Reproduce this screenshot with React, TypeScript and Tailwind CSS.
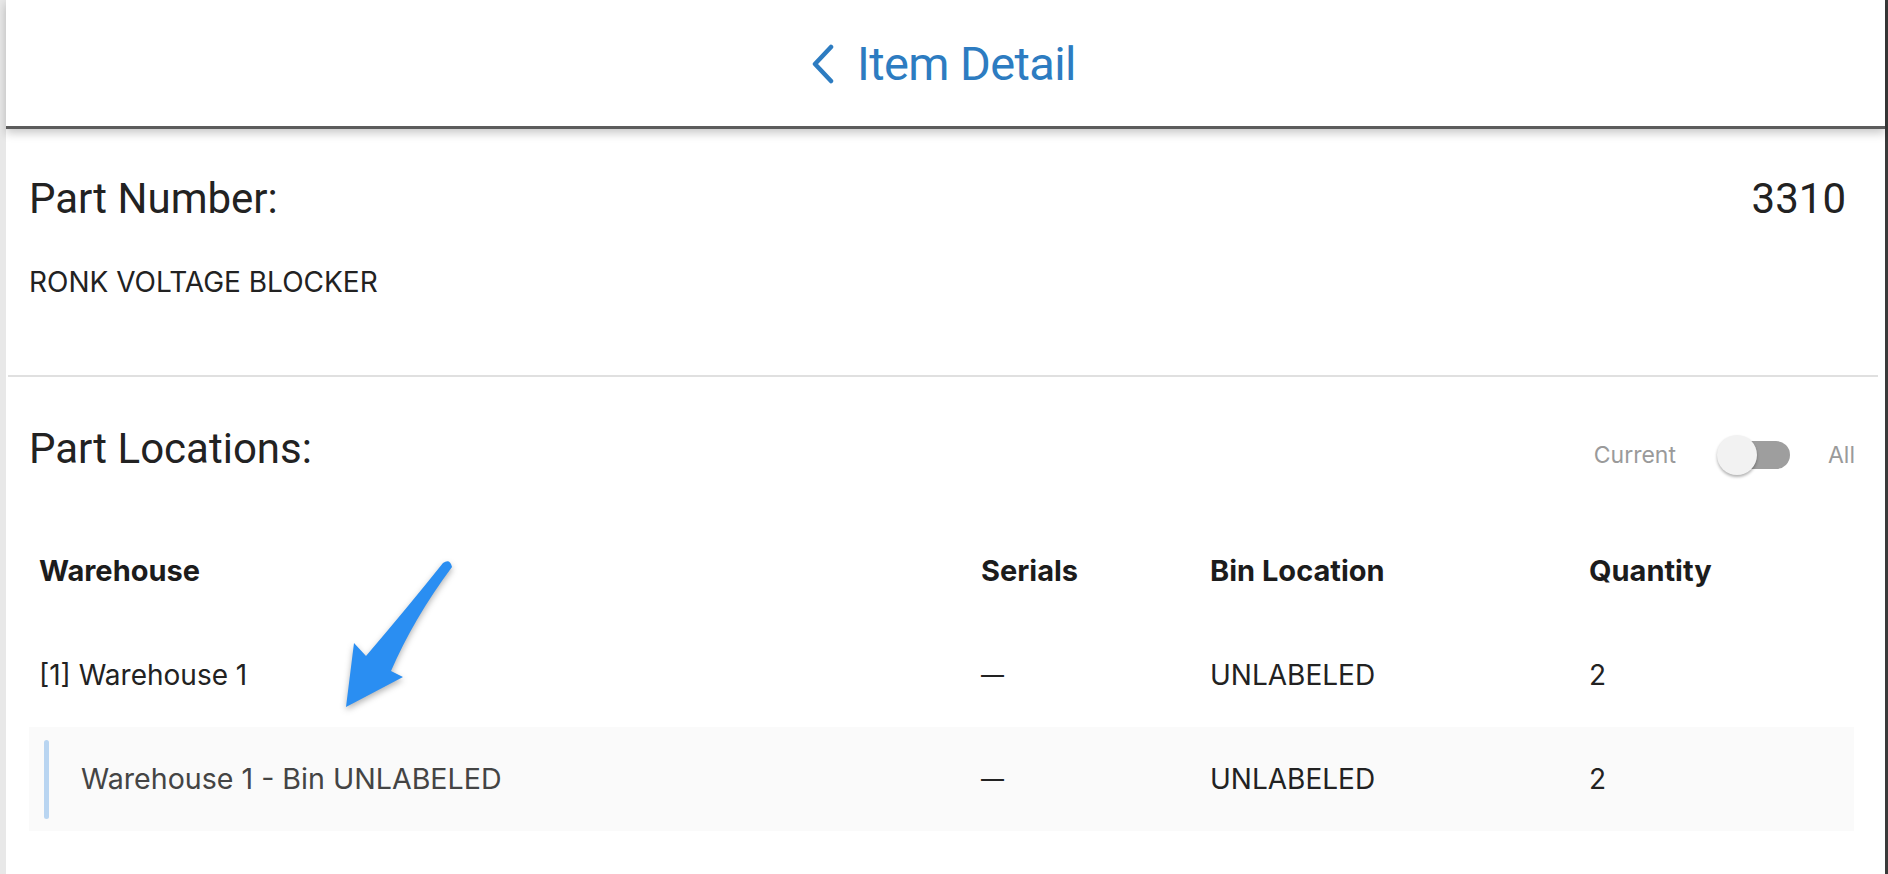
import React from 'react';

const rows = [
  { warehouse: '[1] Warehouse 1', serials: '—', bin: 'UNLABELED', qty: '2', sub: false },
  { warehouse: 'Warehouse 1 - Bin UNLABELED', serials: '—', bin: 'UNLABELED', qty: '2', sub: true },
];

const COLS = 'grid grid-cols-[942px_229px_379px_1fr] items-center px-[10px]';

function Toggle() {
  return (
    <div className="flex items-center text-[23px] text-[#9a9a9a] mt-[13px]">
      <span>Current</span>
      <div className="relative w-[73px] h-[40px] ml-[41px]">
        <div className="absolute left-[6px] right-0 top-[6px] h-[28px] rounded-full bg-[#9e9e9e]" />
        <div className="absolute left-0 top-0 w-[40px] h-[40px] rounded-full bg-[#f2f2f2] shadow-[0_2px_3px_rgba(0,0,0,0.3)]" />
      </div>
      <span className="ml-[38px]">All</span>
    </div>
  );
}

export default function App() {
  return (
    <div
      className="flex h-[874px] w-full bg-white overflow-hidden"
      style={{ fontFamily: 'Inter, "Noto Sans", sans-serif' }}
    >
      <div className="w-[6px] shrink-0 bg-[#e8e8e8]" />
      <div className="flex-1 flex flex-col relative">
        {/* Header */}
        <header className="relative z-10 h-[129px] shrink-0 flex items-center justify-center border-b-[3px] border-[#5c5c5c] shadow-[0_4px_9px_rgba(0,0,0,0.22)]">
          <div className="flex items-center gap-[22px] text-[#2d7cc1] mt-[1px] -ml-[4px]">
            <svg width="24" height="40" viewBox="0 0 24 40" fill="none">
              <path d="M20 3 L4 20 L20 37" stroke="currentColor" strokeWidth="4.5" strokeLinecap="round" strokeLinejoin="round" />
            </svg>
            <span className="text-[47px] leading-[50px] tracking-[-0.6px]" style={{ fontFamily: 'Roboto, sans-serif' }}>
              Item Detail
            </span>
          </div>
        </header>

        {/* Part number */}
        <section className="h-[246px] shrink-0 pt-[45px] pl-[23px] pr-[39px] text-[#222]">
          <div className="flex justify-between text-[42px] leading-[50px]" style={{ fontFamily: 'Roboto, sans-serif' }}>
            <span>Part Number:</span>
            <span>3310</span>
          </div>
          <div className="mt-[41px] text-[28px] leading-[34px]">RONK VOLTAGE BLOCKER</div>
        </section>
        <div className="ml-[2px] mr-[7px] h-[2px] bg-[#e0e0e0] shrink-0" />

        {/* Part locations */}
        <section className="pt-[45px] pl-[23px] pr-[30px]">
          <div className="flex justify-between items-center">
            <span className="text-[42px] leading-[50px] text-[#222]" style={{ fontFamily: 'Roboto, sans-serif' }}>
              Part Locations:
            </span>
            <Toggle />
          </div>
        </section>

        <div className="mt-[44px] ml-[23px] mr-[31px]">
          <div className={`${COLS} h-[104px] text-[29px] font-bold text-[#1c1c1c]`}>
            <span>Warehouse</span>
            <span>Serials</span>
            <span>Bin Location</span>
            <span>Quantity</span>
          </div>
          {rows.map((r) => (
            <div
              key={r.warehouse}
              className={`${COLS} h-[104px] text-[28px] text-[#222] ${r.sub ? 'bg-[#fafafa] relative' : ''}`}
            >
              {r.sub ? (
                <span className="flex items-center">
                  <span className="absolute left-[15px] top-[13px] bottom-[12px] w-[5px] rounded-full bg-[#b9d5f1]" />
                  <span className="pl-[42px] text-[28.6px] text-[#444]">{r.warehouse}</span>
                </span>
              ) : (
                <span>{r.warehouse}</span>
              )}
              <span className="text-[23px]">{r.serials}</span>
              <span>{r.bin}</span>
              <span>{r.qty}</span>
            </div>
          ))}
        </div>

        {/* Annotation arrow */}
        <svg
          className="absolute left-[324px] top-[550px] drop-shadow-[0_3px_3px_rgba(0,0,0,0.3)]"
          width="130"
          height="170"
          viewBox="0 0 130 170"
        >
          <path
            d="M113 13 Q77 58 36 106 L24 93 L16 157 L73 127 L61 121 Q84 68 122 17 Q120 8 113 13 Z"
            fill="#2a8ef2"
          />
        </svg>
      </div>
      <div className="w-[3px] shrink-0 bg-[#3a3a3a]" />
    </div>
  );
}
